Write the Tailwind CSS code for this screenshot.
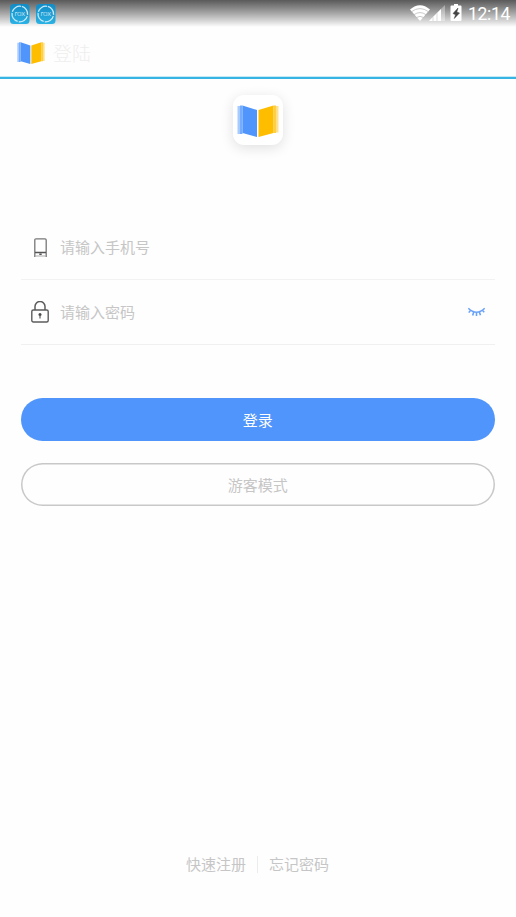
<!DOCTYPE html>
<html lang="zh-CN">
<head>
<meta charset="utf-8">
<title>登陆</title>
<script src="https://cdn.jsdelivr.net/npm/@tailwindcss/browser@4"></script>
</head>
<body class="bg-[#fefefe] font-['Noto_Sans_CJK_SC',sans-serif] text-[15px]">
<svg class="absolute size-0">
  <defs>
    <linearGradient id="tile" x1="0" y1="0" x2="0" y2="1"><stop stop-color="#128bc5"/><stop offset="1" stop-color="#2bb2e4"/></linearGradient>
    <symbol id="book" viewBox="0 0 42 32" preserveAspectRatio="none">
      <path d="M.5 1h2.500v28H.5z" fill="#a7caff"/>
      <path d="M3 .5h2.500v28.500H3z" fill="#75acff"/>
      <path d="M5.500 .5L20 5V32L5.500 28z" fill="#4f95fb"/>
      <path d="M39 1h2.500v26.500H39z" fill="#ffe18a"/>
      <path d="M36.500 .5H39V28h-2.500z" fill="#ffce45"/>
      <path d="M21.500 5L36.500 .5V28L21.500 32z" fill="#ffbd00"/>
    </symbol>
    <symbol id="rox" viewBox="0 0 20 20">
      <rect width="19.500" height="20" rx="3.500" fill="url(#tile)"/>
      <circle cx="9.800" cy="10" r="7.800" fill="none" stroke="#c8eafa" stroke-width="1.300" stroke-dasharray="11 1.250" transform="rotate(-75 9.800 10)"/>
      <text x="9.800" y="12.300" text-anchor="middle" font-family="Lato,sans-serif" font-size="8" font-weight="300" fill="#fff">rox</text>
    </symbol>
  </defs>
</svg>
<main class="flex h-[917px] w-[516px] flex-col overflow-hidden">
  <header class="flex h-[79px] shrink-0 flex-col border-b-2 border-[#36b5e5] shadow-[inset_0_-1px_0_#c5e9f7]">
    <div class="flex h-[27px] items-start bg-linear-to-b from-[#5a5a5a] to-[#fefefe] pl-[10px] pr-[6px]">
      <svg class="mt-[4px] size-5"><use href="#rox"/></svg>
      <svg class="ml-[6px] mt-[4px] size-5"><use href="#rox"/></svg>
      <svg class="ml-auto mt-[5px] h-4 w-5" viewBox="0 0 21 16" preserveAspectRatio="none">
        <path d="M0 4.500Q10.500-4 21 4.500L10.500 16z" fill="#fff"/>
        <path d="M1.500 6.800q9-6.500 18 0M4 9.800q6.500-4.500 13 0M6.500 12.600q4-2.500 8 0" fill="none" stroke="#bbb" stroke-width=".8"/>
      </svg>
      <svg class="-ml-px mt-[5px] h-4 w-4" viewBox="0 0 16 16">
        <path d="M0 16L16 0v16z" fill="#fff" opacity=".35"/>
        <path d="M0 16L12 4V16z" fill="#fff"/>
        <path d="M4 12v4M8 8v8" stroke="#ccc" stroke-width=".7"/>
      </svg>
      <svg class="ml-[5px] mt-[4px] h-[17px] w-3" viewBox="0 0 12 17">
        <path d="M4 0h4v1.500h2.500Q11.500 1.500 11.500 2.500v13.500q0 1-1 1h-9Q.5 17 .5 16V2.500Q.5 1.500 1.500 1.500H4z" fill="#fff"/>
        <path d="M8 4L3 9.500l2.500 1.200L4.300 14.500 9.500 9 6.800 8z" fill="#444" stroke="#444" stroke-width=".5"/>
      </svg>
      <span class="ml-[6px] mt-[4px] w-[42px] whitespace-nowrap text-center font-[Roboto] text-[17.500px] font-normal leading-[20px] tracking-[-0.3px] text-white">12:14</span>
    </div>
    <div class="flex h-[50px] items-center pl-[17px] pt-px">
      <svg class="h-[22px] w-7"><use href="#book"/></svg>
      <h1 class="ml-[8px] text-[19px] font-light leading-[30px] text-[#eee]">登陆</h1>
    </div>
  </header>
  <section class="flex h-[136px] shrink-0 justify-center pt-4">
    <div class="flex size-[50px] items-center justify-center rounded-[11px] bg-white pt-[2px] shadow-[0_3px_13px_rgba(0,0,0,0.12)]">
      <svg class="h-8 w-[42px] shrink-0"><use href="#book"/></svg>
    </div>
  </section>
  <form class="ml-[21px] mr-[21.500px] flex flex-col">
    <label class="flex h-[65px] items-center border-b border-[#f2f2f2] pl-[13px] text-[#c6c6c6]">
      <svg class="h-[19px] w-[13px] shrink-0" viewBox="0 0 13 19" fill="none" stroke="#777">
        <path d="M.8 19V2Q.8.800 2 .8h9q1.200 0 1.200 1.200v17" stroke-width="1.300"/>
        <path d="M1 14.500h11" stroke="#555" stroke-width="1.500"/><path d="M1 18h11" stroke="#aaa"/><path d="M5.300 16.200h2.400" stroke="#444" stroke-width="1.400"/>
      </svg>
      <span class="ml-[13px]">请输入手机号</span>
    </label>
    <label class="flex h-[65px] items-center border-b border-[#f0f0f0] pl-[10px] pr-[10px] text-[#c6c6c6]">
      <svg class="h-[22px] w-[18px] shrink-0" viewBox="0 0 18 22" fill="none" stroke="#5c5c5c">
        <rect x=".8" y="9" width="16.400" height="12" rx="1.500" stroke-width="1.400"/>
        <path d="M4 9V5.500a5 5 0 0 1 10 0V9" stroke-width="1.500"/>
        <circle cx="9" cy="13.500" r="1.500" fill="#444" stroke="none"/><path d="M9 13.500v4" stroke-width="1.200"/>
      </svg>
      <span class="ml-[11px]">请输入密码</span>
      <svg class="ml-auto h-[10px] w-[17px]" viewBox="0 0 16 10" preserveAspectRatio="none" fill="none" stroke="#6ba3f8" stroke-width="1.500">
        <path d="M.3 1.200q7.700 8 15.400 0M2.300 3.500L.7 5.600M5.300 5.300L4.400 8.500M8 5.500v3.600M10.700 5l1 3.300M13.500 3.300l1.800 2"/>
      </svg>
    </label>
    <button type="button" class="mt-[53px] h-[43px] rounded-full bg-[#4f95fb] pt-px text-white">登录</button>
    <button type="button" class="mt-[22px] h-[43px] rounded-full pt-px text-[#c6c6c6] shadow-[inset_0_0_0_1.500px_#c8c8c8]">游客模式</button>
  </form>
  <footer class="mb-[41px] mt-auto flex h-6 items-center justify-center pr-px text-[#c6c6c6]">
    <a>快速注册</a>
    <span class="mx-[11px] h-[17px] w-px bg-[#ececec]"></span>
    <a>忘记密码</a>
  </footer>
</main>
</body>
</html>
